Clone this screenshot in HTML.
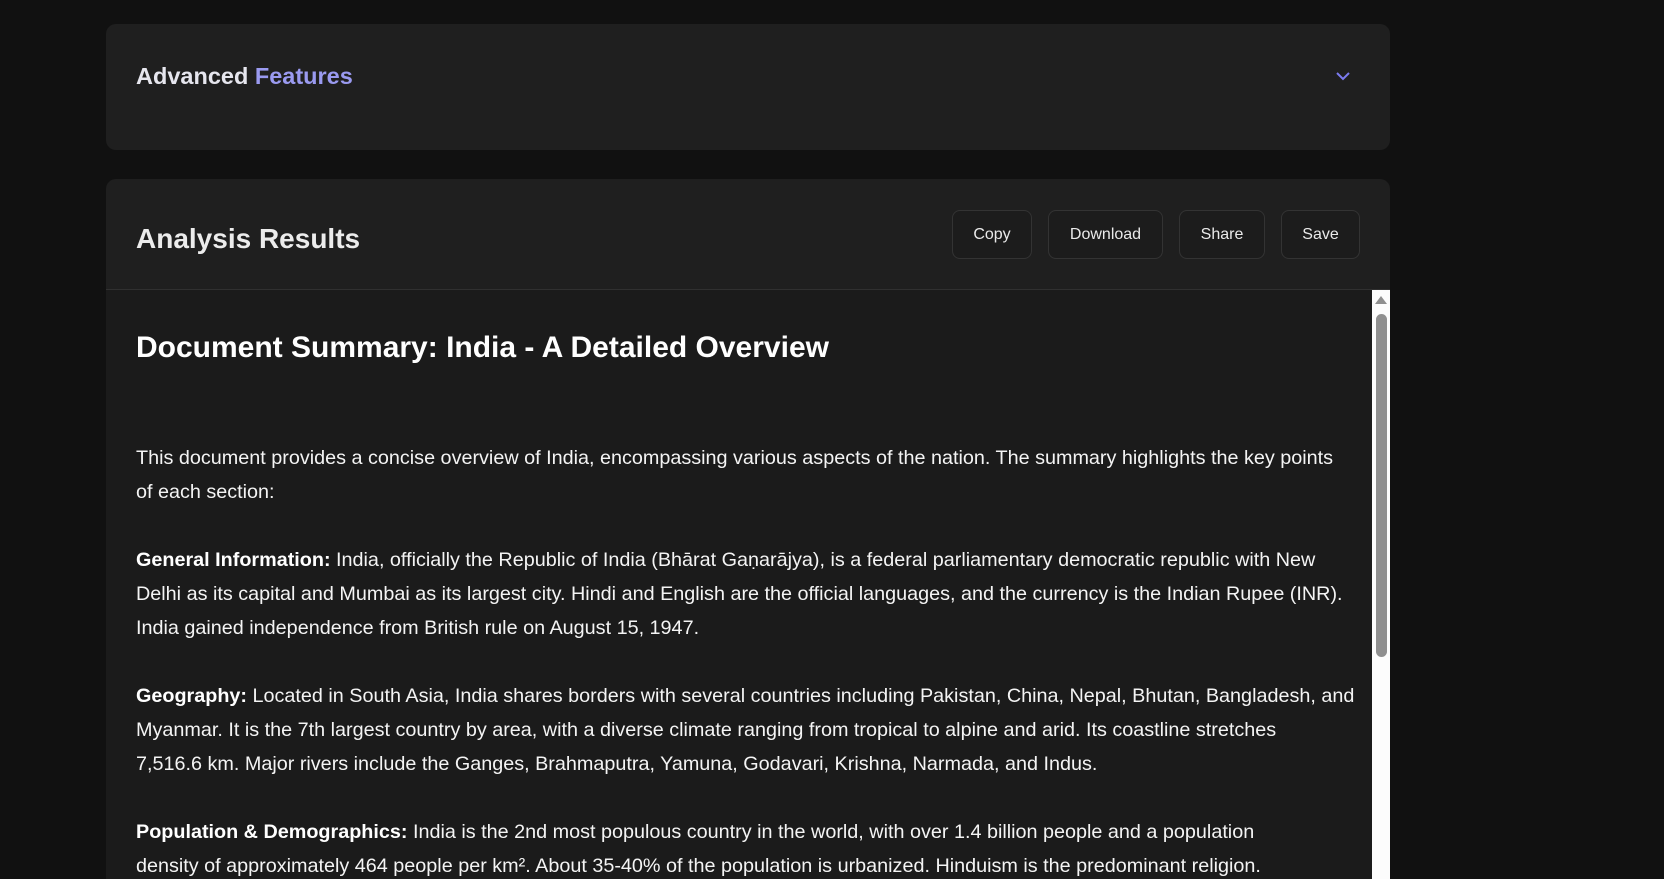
<!DOCTYPE html>
<html><head><meta charset="utf-8"><style>
*{margin:0;padding:0;box-sizing:border-box}
body{width:1664px;height:861px;background:#111;overflow:hidden;font-family:"Liberation Sans",sans-serif;color:#f2f2f2;position:relative}
.card1{position:absolute;left:106px;top:24px;width:1284px;height:126px;background:#1f1f1f;border-radius:10px}
.card1 h2{position:absolute;left:30px;top:37px;font-size:23.5px;font-weight:bold;line-height:30px;color:#e6e6ee}
.card1 h2 span{color:#9a9af0}
.chev{position:absolute;left:1230px;top:46px}
.card2{position:absolute;left:106px;top:179px;width:1284px;height:700px;background:#1f1f1f;border-radius:10px 10px 0 0;overflow:hidden}
.hdr{height:111px;border-bottom:1px solid #303030;position:relative}
.hdr h2{position:absolute;left:30px;top:42px;font-size:28px;font-weight:bold;line-height:36px;color:#ececec}
.btn{position:absolute;top:31px;height:49px;border:1px solid #333;border-radius:8px;background:#1c1c1c;color:#eaeaea;font-size:16px;line-height:47px;text-align:center}
.content{position:absolute;left:0;top:111px;width:1266px;bottom:0;background:#1b1b1b}
.content h1{position:absolute;left:30px;top:38px;font-size:30px;font-weight:bold;line-height:40px;color:#fff}
.txt{position:absolute;left:30px;font-size:19.8px;line-height:34px;white-space:nowrap;color:#f4f4f4}
.txt p{margin-bottom:34px}
.txt b{color:#fff}
.sb{position:absolute;left:1266px;top:111px;width:19px;bottom:0;background:#fcfcfc}
.thumb{position:absolute;left:4px;top:24px;width:11px;height:343px;border-radius:6px;background:#8f8f8f}
.arr{position:absolute;left:3px;top:6px;width:0;height:0;border-left:6px solid transparent;border-right:6px solid transparent;border-bottom:8px solid #8f8f8f}
</style></head><body>
<div class="card1"><h2>Advanced <span>Features</span></h2>
<svg class="chev" width="16" height="12" viewBox="0 0 16 12"><path d="M1 3 L7 9 L13 3" fill="none" stroke="#7b7bf0" stroke-width="2"/></svg></div>
<div class="card2">
<div class="hdr"><h2>Analysis Results</h2>
<div class="btn" style="left:846px;width:80px">Copy</div>
<div class="btn" style="left:942px;width:115px">Download</div>
<div class="btn" style="left:1073px;width:86px">Share</div>
<div class="btn" style="left:1175px;width:79px">Save</div>
</div>
<div class="content">
<h1>Document Summary: India - A Detailed Overview</h1>
<div class="txt" style="top:151px">
<p>This document provides a concise overview of India, encompassing various aspects of the nation. The summary highlights the key points<br>of each section:</p>
<p><b>General Information:</b> India, officially the Republic of India (Bhārat Gaṇarājya), is a federal parliamentary democratic republic with New<br>Delhi as its capital and Mumbai as its largest city. Hindi and English are the official languages, and the currency is the Indian Rupee (INR).<br>India gained independence from British rule on August 15, 1947.</p>
<p><b>Geography:</b> Located in South Asia, India shares borders with several countries including Pakistan, China, Nepal, Bhutan, Bangladesh, and<br>Myanmar. It is the 7th largest country by area, with a diverse climate ranging from tropical to alpine and arid. Its coastline stretches<br>7,516.6 km. Major rivers include the Ganges, Brahmaputra, Yamuna, Godavari, Krishna, Narmada, and Indus.</p>
<p><b>Population &amp; Demographics:</b> India is the 2nd most populous country in the world, with over 1.4 billion people and a population<br>density of approximately 464 people per km². About 35-40% of the population is urbanized. Hinduism is the predominant religion.</p>
</div>
</div>
<div class="sb"><div class="arr"></div><div class="thumb"></div></div>
</div>
</body></html>
